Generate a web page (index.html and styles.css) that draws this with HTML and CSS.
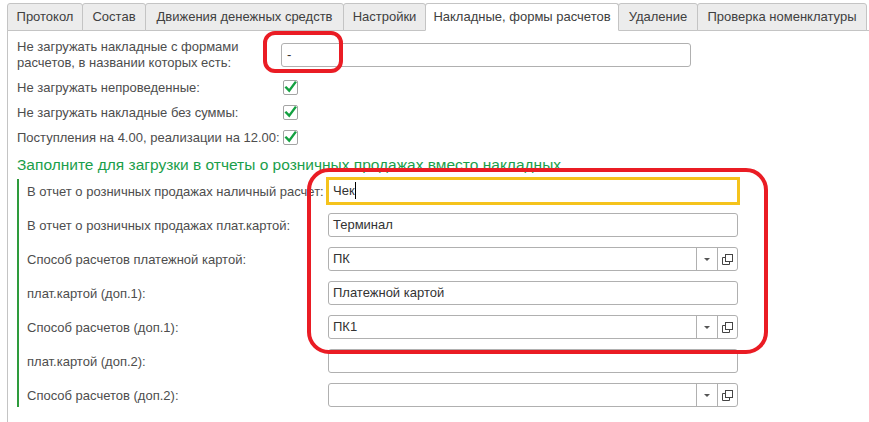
FILE: index.html
```html
<!DOCTYPE html>
<html lang="ru">
<head>
    <meta charset="UTF-8">
    <title>Накладные, формы расчетов</title>
    <link rel="stylesheet" href="styles.css">
</head>
<body>
    <!-- вкладки -->
    <div class="tabs">
        <div class="tab tab-protocol">Протокол</div>
        <div class="tab tab-sostav">Состав</div>
        <div class="tab tab-dds">Движения денежных средств</div>
        <div class="tab tab-settings">Настройки</div>
        <div class="tab tab-invoices active">Накладные, формы расчетов</div>
        <div class="tab tab-delete">Удаление</div>
        <div class="tab tab-check">Проверка номенклатуры</div>
    </div>

    <div class="page">
        <div class="row row-first">
            <div class="label">Не загружать накладные с формами расчетов, в названии которых есть:</div>
            <div class="field">-</div>
        </div>
        <div class="row row-check">
            <div class="label">Не загружать непроведенные:</div>
            <span class="check"><svg viewBox="0 0 15 15" width="15" height="15"><path d="M3.2 7.6 L6.2 10.6 L12.2 2.6" /></svg></span>
        </div>
        <div class="row row-check">
            <div class="label">Не загружать накладные без суммы:</div>
            <span class="check"><svg viewBox="0 0 15 15" width="15" height="15"><path d="M3.2 7.6 L6.2 10.6 L12.2 2.6" /></svg></span>
        </div>
        <div class="row row-check">
            <div class="label nowrap">Поступления на 4.00, реализации на 12.00:</div>
            <span class="check"><svg viewBox="0 0 15 15" width="15" height="15"><path d="M3.2 7.6 L6.2 10.6 L12.2 2.6" /></svg></span>
        </div>

        <div class="group-title">Заполните для загрузки в отчеты о розничных продажах вместо накладных</div>

        <div class="group">
            <div class="grow">
                <div class="glabel">В отчет о розничных продажах наличный расчет:</div>
                <div class="input focused">Чек<span class="caret"></span></div>
            </div>
            <div class="grow">
                <div class="glabel">В отчет о розничных продажах плат.картой:</div>
                <div class="input">Терминал</div>
            </div>
            <div class="grow">
                <div class="glabel">Способ расчетов платежной картой:</div>
                <div class="input combo">
                    <span class="value">ПК</span>
                    <span class="btn"><span class="arrow"></span></span>
                    <span class="btn"><svg viewBox="0 0 11 11" width="11" height="11"><rect x="3.5" y="0.5" width="7" height="7" /><path d="M3.5 3.5 H0.5 V10.5 H7.5 V7.5" /></svg></span>
                </div>
            </div>
            <div class="grow">
                <div class="glabel">плат.картой (доп.1):</div>
                <div class="input">Платежной картой</div>
            </div>
            <div class="grow">
                <div class="glabel">Способ расчетов (доп.1):</div>
                <div class="input combo">
                    <span class="value">ПК1</span>
                    <span class="btn"><span class="arrow"></span></span>
                    <span class="btn"><svg viewBox="0 0 11 11" width="11" height="11"><rect x="3.5" y="0.5" width="7" height="7" /><path d="M3.5 3.5 H0.5 V10.5 H7.5 V7.5" /></svg></span>
                </div>
            </div>
            <div class="grow">
                <div class="glabel">плат.картой (доп.2):</div>
                <div class="input"></div>
            </div>
            <div class="grow">
                <div class="glabel">Способ расчетов (доп.2):</div>
                <div class="input combo">
                    <span class="value"></span>
                    <span class="btn"><span class="arrow"></span></span>
                    <span class="btn"><svg viewBox="0 0 11 11" width="11" height="11"><rect x="3.5" y="0.5" width="7" height="7" /><path d="M3.5 3.5 H0.5 V10.5 H7.5 V7.5" /></svg></span>
                </div>
            </div>
        </div>
    </div>

    <!-- пометки красным поверх формы -->
    <div class="mark mark-small"></div>
    <div class="mark mark-big"></div>
</body>
</html>
```

FILE: styles.css
```css
/* базовые стили */
* {
    box-sizing: border-box;
    margin: 0;
    padding: 0;
}

body {
    position: relative;
    width: 869px;
    height: 422px;
    overflow: hidden;
    background: #fff;
    font-family: "Liberation Sans", Arial, sans-serif;
    font-size: 13px;
    color: #4d4d4d;
}

/* вкладки */
.tabs {
    display: flex;
    padding: 3px 0 0 7px;
    height: 31px;
}

.tab {
    height: 28px;
    line-height: 26px;
    margin-right: -1px;
    background: #ececec;
    border: 1px solid #c4c4c4;
    border-radius: 3px 3px 0 0;
    color: #404040;
    text-align: center;
    white-space: nowrap;
}

.tab-protocol { width: 76px; }
.tab-sostav { width: 64px; }
.tab-dds { width: 199px; }
.tab-settings { width: 83px; }
.tab-invoices { width: 194px; }
.tab-delete { width: 80px; }
.tab-check { width: 170px; }

.tab.active {
    background: #fff;
    border-bottom-color: #fff;
    position: relative;
    z-index: 1;
}

/* рабочая область */
.page {
    margin: -1px 0 0 7px;
    border-top: 1px solid #c4c4c4;
    border-left: 1px solid #c4c4c4;
    padding: 7px 0 0 9px;
    height: 392px;
}

.row {
    display: flex;
    align-items: center;
}

.row-first {
    height: 33px;
}

.row-first .field {
    width: 410px;
    height: 24px;
    line-height: 22px;
    padding: 0 5px;
    border: 1px solid #b0b0b0;
    border-radius: 3px;
    color: #333;
}

.row-check {
    height: 25px;
}

.row-first + .row-check {
    margin-top: 4px;
}

.label {
    width: 264px;
    line-height: 16px;
    flex: none;
}

.label.nowrap {
    white-space: nowrap;
}

.check {
    display: inline-block;
    width: 15px;
    height: 15px;
    margin-left: 2px;
    border: 1px solid #a4a4a4;
    border-radius: 2px;
    background: #fff;
    position: relative;
}

.check svg {
    position: absolute;
    left: -1px;
    top: -1px;
}

.check path {
    fill: none;
    stroke: #13a040;
    stroke-width: 2.4;
    stroke-linecap: square;
}

/* группа с зелёной полосой */
.group-title {
    margin-top: 6px;
    font-size: 15.5px;
    line-height: 18px;
    color: #1a9e4a;
    white-space: nowrap;
}

.group {
    margin-top: 5px;
    border-left: 2px solid #2e9b3c;
    padding-left: 8px;
    display: flex;
    flex-direction: column;
    gap: 10px;
    width: 740px;
}

.grow {
    display: flex;
    align-items: center;
    height: 24px;
}

.glabel {
    width: 301px;
    flex: none;
    white-space: nowrap;
}

.input {
    width: 410px;
    height: 24px;
    line-height: 22px;
    padding: 0 4px;
    border: 1px solid #b0b0b0;
    border-radius: 3px;
    color: #333;
    font-size: 13px;
    background: #fff;
}

.input.focused {
    border-color: #f5c31c;
    border-radius: 0;
    box-shadow: 0 0 0 2px #f5c31c;
    position: relative;
    z-index: 1;
}

.caret {
    display: inline-block;
    width: 1px;
    height: 17px;
    background: #000;
    vertical-align: -4px;
}

.combo {
    display: flex;
    padding: 0;
}

.combo .value {
    flex: 1;
    padding: 0 4px;
}

.combo .btn {
    width: 21px;
    border-left: 1px solid #b0b0b0;
    display: flex;
    align-items: center;
    justify-content: center;
}

.combo .btn:last-child {
    width: 20px;
}

.arrow {
    width: 0;
    height: 0;
    border-left: 3px solid transparent;
    border-right: 3px solid transparent;
    border-top: 3px solid #555;
    margin-top: 1px;
}

.combo svg {
    fill: none;
    stroke: #444;
    stroke-width: 1;
}

/* красные пометки */
.mark {
    position: absolute;
    border: 4px solid #ea1c24;
    pointer-events: none;
}

.mark-small {
    left: 263px;
    top: 31px;
    width: 80px;
    height: 42px;
    border-radius: 12px;
}

.mark-big {
    left: 307px;
    top: 168px;
    width: 461px;
    height: 186px;
    border-radius: 22px;
}
```
